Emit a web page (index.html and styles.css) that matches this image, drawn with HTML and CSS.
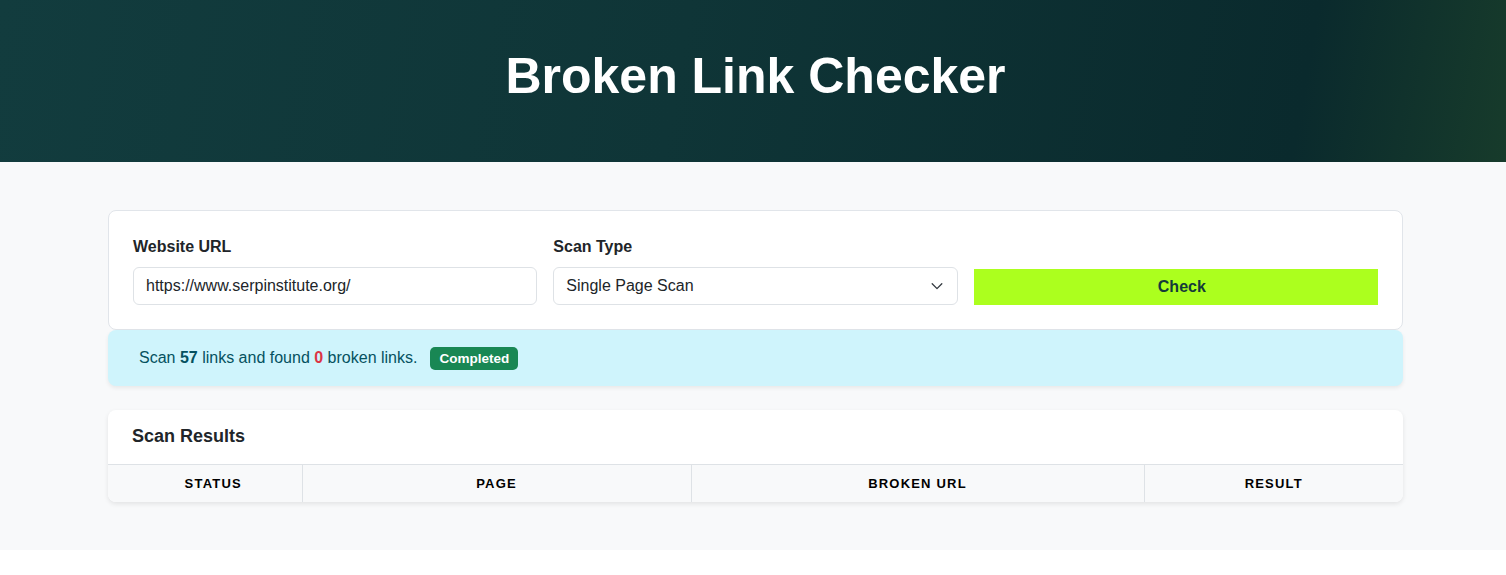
FILE: index.html
```html
<!DOCTYPE html>
<html lang="en">
<head>
<meta charset="utf-8">
<title>Broken Link Checker</title>
<link rel="stylesheet" href="styles.css">
</head>
<body>
  <header class="hero">
    <h1 class="hero-title">Broken Link Checker</h1>
  </header>

  <main class="page">
    <div class="container">
      <form class="scan-form">
        <div class="field">
          <label class="field-label" for="url">Website URL</label>
          <input class="field-input" id="url" type="text" value="https://www.serpinstitute.org/">
        </div>
        <div class="field">
          <label class="field-label" for="type">Scan Type</label>
          <div class="select-wrap">
            <select class="field-input field-select" id="type">
              <option>Single Page Scan</option>
              <option>Full Site Scan</option>
            </select>
            <svg class="select-chevron" viewBox="0 0 16 16" width="16" height="14" aria-hidden="true">
              <path d="M2.5 5.5 8 11 13.5 5.5" fill="none" stroke="#343a40" stroke-width="1.5" stroke-linecap="round" stroke-linejoin="round"/>
            </svg>
          </div>
        </div>
        <div class="field field-action">
          <button class="check-btn" type="button">Check</button>
        </div>
      </form>

      <div class="summary">
        <span>Scan <strong class="num">57</strong> links and found <strong class="num num-bad">0</strong> broken links.</span>
        <span class="badge">Completed</span>
      </div>

      <section class="results">
        <h2 class="results-title">Scan Results</h2>
        <table class="results-table">
          <colgroup>
            <col class="col-status">
            <col class="col-page">
            <col class="col-url">
            <col>
          </colgroup>
          <thead>
            <tr>
              <th>Status</th>
              <th>Page</th>
              <th>Broken URL</th>
              <th>Result</th>
            </tr>
          </thead>
        </table>
      </section>
    </div>
  </main>
</body>
</html>
```

FILE: styles.css
```css
* {
  box-sizing: border-box;
}

body {
  margin: 0;
  background: #ffffff;
  font-family: "Liberation Sans", Arial, sans-serif;
  color: #212529;
}

/* Top banner */
.hero {
  height: 162px;
  padding: 46px 0 0 5px;
  background: linear-gradient(100deg, #123c3e 0%, #0f3537 45%, #0a2a2d 86%, #173b2b 100%);
  text-align: center;
}

.hero-title {
  margin: 0;
  font-size: 50px;
  line-height: 1.2;
  font-weight: 700;
  color: #ffffff;
}

/* Main area */
.page {
  background: #f8f9fa;
  padding: 48px 0 48px 5px;
}

.container {
  width: 1295px;
  margin: 0 auto;
}

/* Form card */
.scan-form {
  display: grid;
  grid-template-columns: 1fr 1fr 1fr;
  column-gap: 16px;
  padding: 24px;
  background: #ffffff;
  border: 1px solid #e1e5ea;
  border-radius: 8px;
}

.field {
  display: flex;
  flex-direction: column;
}

.field-action {
  justify-content: flex-end;
}

.field-label {
  display: block;
  font-size: 16px;
  line-height: 24px;
  font-weight: 700;
  color: #212529;
  margin-bottom: 8px;
}

.field-input {
  display: block;
  width: 100%;
  height: 38px;
  padding: 6px 12px;
  font-family: inherit;
  font-size: 16px;
  line-height: 24px;
  color: #212529;
  background: #ffffff;
  border: 1px solid #dee2e6;
  border-radius: 6px;
  outline: none;
}

.select-wrap {
  position: relative;
}

.field-select {
  appearance: none;
  -webkit-appearance: none;
  padding-right: 36px;
}

.select-chevron {
  position: absolute;
  right: 13px;
  top: 12px;
  pointer-events: none;
}

.check-btn {
  height: 36px;
  width: 100%;
  padding: 0 0 0 12px;
  border: 0;
  border-radius: 0;
  background: #acff1e;
  font-family: inherit;
  font-size: 16px;
  font-weight: 700;
  color: #143a3a;
  cursor: pointer;
}

/* Summary strip */
.summary {
  display: flex;
  align-items: center;
  gap: 13px;
  padding: 16px 31px;
  background: #cff4fc;
  border-radius: 8px;
  box-shadow: 0 2px 4px rgba(0, 0, 0, 0.07);
  font-size: 16px;
  line-height: 24px;
  color: #055160;
}

.num {
  font-weight: 700;
  color: #055160;
}

.num-bad {
  color: #dc3545;
}

.badge {
  display: inline-block;
  padding: 4px 9px;
  font-size: 13.5px;
  line-height: 15px;
  font-weight: 700;
  color: #ffffff;
  background: #198754;
  border-radius: 5px;
}

/* Results card */
.results {
  margin-top: 24px;
  background: #ffffff;
  border-radius: 8px;
  overflow: hidden;
  box-shadow: 0 2px 5px rgba(0, 0, 0, 0.09);
}

.results-title {
  margin: 0;
  padding: 16px 24px;
  font-size: 18px;
  line-height: 1.2;
  font-weight: 700;
  color: #212529;
}

.results-table {
  width: 100%;
  border-collapse: collapse;
  table-layout: fixed;
}

.col-status { width: 194px; }
.col-page { width: 389px; }
.col-url { width: 453px; }

.results-table th {
  padding: 9px 8px;
  background: #f8f9fa;
  border-top: 1px solid #dee2e6;
  border-left: 1px solid #dee2e6;
  font-size: 13px;
  line-height: 19.5px;
  font-weight: 700;
  letter-spacing: 1.2px;
  text-transform: uppercase;
  text-align: center;
  color: #000000;
}

.results-table th:first-child {
  border-left: 0;
  padding-left: 25px;
}
```
